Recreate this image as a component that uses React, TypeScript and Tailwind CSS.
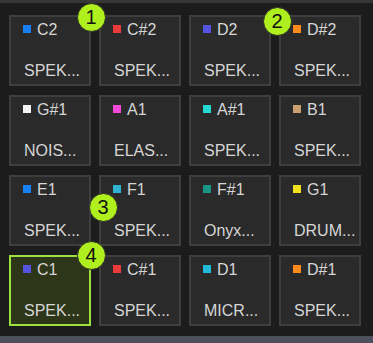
import React from "react";

type Pad = { note: string; color: string; name: string; selected?: boolean };

const pads: Pad[] = [
  { note: "C2", color: "#1a7ff5", name: "SPEK..." },
  { note: "C#2", color: "#ec3b3b", name: "SPEK..." },
  { note: "D2", color: "#5454e0", name: "SPEK..." },
  { note: "D#2", color: "#ff8a1c", name: "SPEK..." },
  { note: "G#1", color: "#f2f2f2", name: "NOIS..." },
  { note: "A1", color: "#f04ad6", name: "ELAS..." },
  { note: "A#1", color: "#22d8d0", name: "SPEK..." },
  { note: "B1", color: "#c9a06e", name: "SPEK..." },
  { note: "E1", color: "#1a80f5", name: "SPEK..." },
  { note: "F1", color: "#2fb2d4", name: "SPEK..." },
  { note: "F#1", color: "#1a9585", name: "Onyx..." },
  { note: "G1", color: "#f0e01e", name: "DRUM..." },
  { note: "C1", color: "#5454e0", name: "SPEK...", selected: true },
  { note: "C#1", color: "#ec3b3b", name: "SPEK..." },
  { note: "D1", color: "#22b8da", name: "MICR..." },
  { note: "D#1", color: "#ff8a1c", name: "SPEK..." },
];

const callouts = [
  { n: "1", x: 91, y: 17 },
  { n: "2", x: 277, y: 21 },
  { n: "3", x: 103, y: 207 },
  { n: "4", x: 91, y: 255 },
];

export default function App() {
  return (
    <div
      className="relative w-[373px] h-[343px] bg-[#1c1c1c] flex flex-col overflow-hidden"
      style={{ fontFamily: '"Liberation Sans", Arial, sans-serif' }}
    >
      <div className="h-[3px] bg-[#363636]" />
      <div className="pt-[12px] pl-[9px] pr-[12px] grid grid-cols-4 gap-x-[8px] gap-y-[9px]">
        {pads.map((p, i) => (
          <div
            key={i}
            className={
              p.selected
                ? "h-[71px] border-2 border-[#9ee03e] bg-[#2e3619] flex flex-col justify-between pt-[4px] pb-[4px] pl-[12px]"
                : "h-[71px] border-2 border-[#3e3e3e] bg-[#2a2a2a] flex flex-col justify-between pt-[4px] pb-[4px] pl-[12px]"
            }
          >
            <div className="flex items-center gap-[6px] h-[18px] text-[16px] leading-[18px] text-[#d6d6d6] whitespace-nowrap">
              <span className="w-[8px] h-[8px] -mt-[2px] shrink-0" style={{ backgroundColor: p.color }} />
              <span>{p.note}</span>
            </div>
            <div className="h-[18px] text-[16px] leading-[18px] text-[#d6d6d6] pl-[1px] whitespace-nowrap">{p.name}</div>
          </div>
        ))}
      </div>
      <div className="flex-1" />
      <div className="h-[7px] bg-[#4b505c]" />
      {callouts.map((c) => (
        <div
          key={c.n}
          className="absolute w-[29px] h-[29px] rounded-full bg-[#b0ef1e] border border-[#2a2a2a] flex items-center justify-center text-[20px] leading-none text-[#111]"
          style={{ left: c.x - 14.5, top: c.y - 14.5 }}
        >
          {c.n}
        </div>
      ))}
    </div>
  );
}
